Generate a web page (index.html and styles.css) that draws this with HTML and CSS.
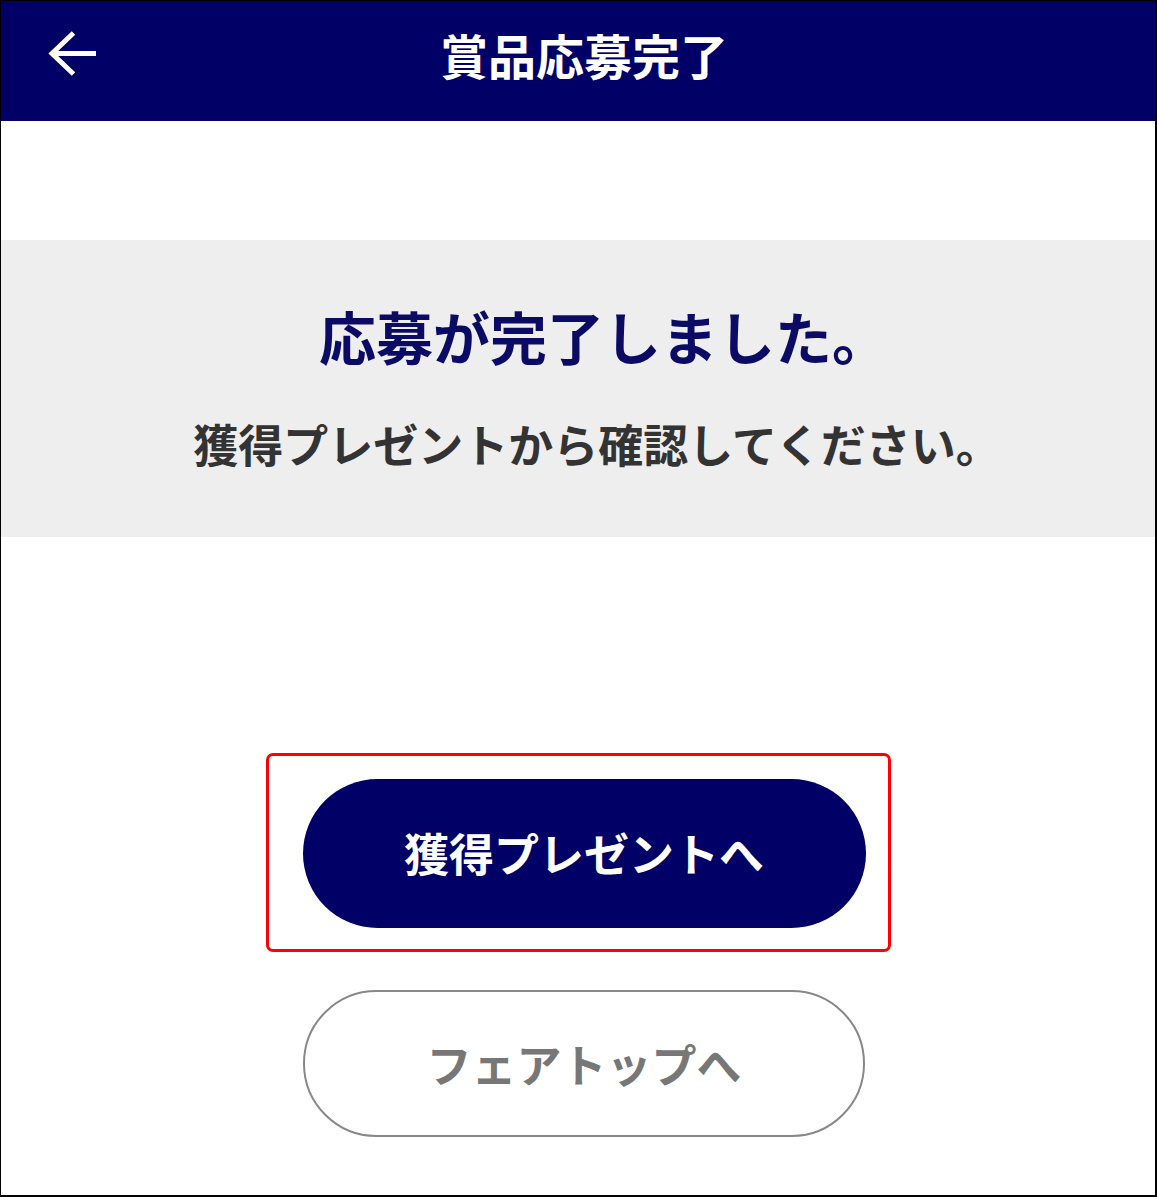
FILE: index.html
```html
<!DOCTYPE html>
<html lang="ja">
<head>
<meta charset="utf-8">
<title>賞品応募完了</title>
<link rel="stylesheet" href="styles.css">
</head>
<body>
<div class="frame">
  <header class="topbar">
    <div class="back">
      <svg class="back-icon" viewBox="0 0 48 48" width="48" height="48">
        <path d="M48 23.5 H4 M25.5 3 L4 23.5 L25.5 44" fill="none" stroke="#fff" stroke-width="5" stroke-linecap="butt" stroke-linejoin="miter"/>
      </svg>
    </div>
    <h1 class="title">賞品応募完了</h1>
    <div></div>
  </header>
  <section class="band">
    <h2 class="heading">応募が完了しました。</h2>
    <p class="sub">獲得プレゼントから確認してください。</p>
  </section>
  <div class="highlight">
    <a class="btn btn-primary">獲得プレゼントへ</a>
  </div>
  <div class="secondary-row">
    <a class="btn btn-outline">フェアトップへ</a>
  </div>
</div>
</body>
</html>
```
FILE: styles.css
```css
html, body {
  margin: 0;
  padding: 0;
  background: #fff;
}
.frame {
  box-sizing: border-box;
  width: 1157px;
  height: 1197px;
  border: 1px solid #000;
  border-right-width: 2px;
  border-bottom-width: 2px;
  background: #fff;
  font-family: "Noto Sans CJK JP", "Noto Sans", sans-serif;
  overflow: hidden;
}
.topbar {
  box-sizing: border-box;
  height: 120px;
  background: #000066;
  display: grid;
  grid-template-columns: 1fr auto 1fr;
  align-items: center;
  padding-bottom: 14px;
}
.back {
  padding-left: 47px;
  display: flex;
  align-items: center;
}
.back-icon {
  display: block;
}
.title {
  margin: 0 0 0 12px;
  color: #fff;
  font-size: 48px;
  font-weight: 700;
  line-height: 1;
  letter-spacing: 0;
}
.band {
  box-sizing: border-box;
  margin-top: 119px;
  height: 297px;
  background: #eeeeee;
  display: flex;
  flex-direction: column;
  align-items: center;
  padding-left: 12px;
  padding-top: 66px;
}
.heading {
  margin: 0 0 0 40px;
  color: #0b0b66;
  font-size: 57px;
  font-weight: 700;
  line-height: 58px;
}
.sub {
  margin: 56px 0 0 26px;
  color: #333;
  font-size: 45px;
  font-weight: 700;
  line-height: 48px;
}
.highlight {
  box-sizing: border-box;
  margin: 216px auto 0;
  width: 625px;
  height: 199px;
  border: 3px solid #ff0000;
  border-radius: 7px;
  padding: 23px 0 0 34px;
}
.btn {
  box-sizing: border-box;
  display: flex;
  align-items: center;
  justify-content: center;
  border-radius: 75px;
  font-size: 45px;
  font-weight: 700;
  line-height: 1;
  text-decoration: none;
}
.btn-primary {
  width: 563px;
  height: 149px;
  background: #000066;
  color: #fff;
  padding-bottom: 2px;
}
.secondary-row {
  margin-top: 38px;
  padding-left: 302px;
}
.btn-outline {
  width: 562px;
  height: 147px;
  border: 2px solid #888;
  color: #777;
  background: #fff;
}
```
